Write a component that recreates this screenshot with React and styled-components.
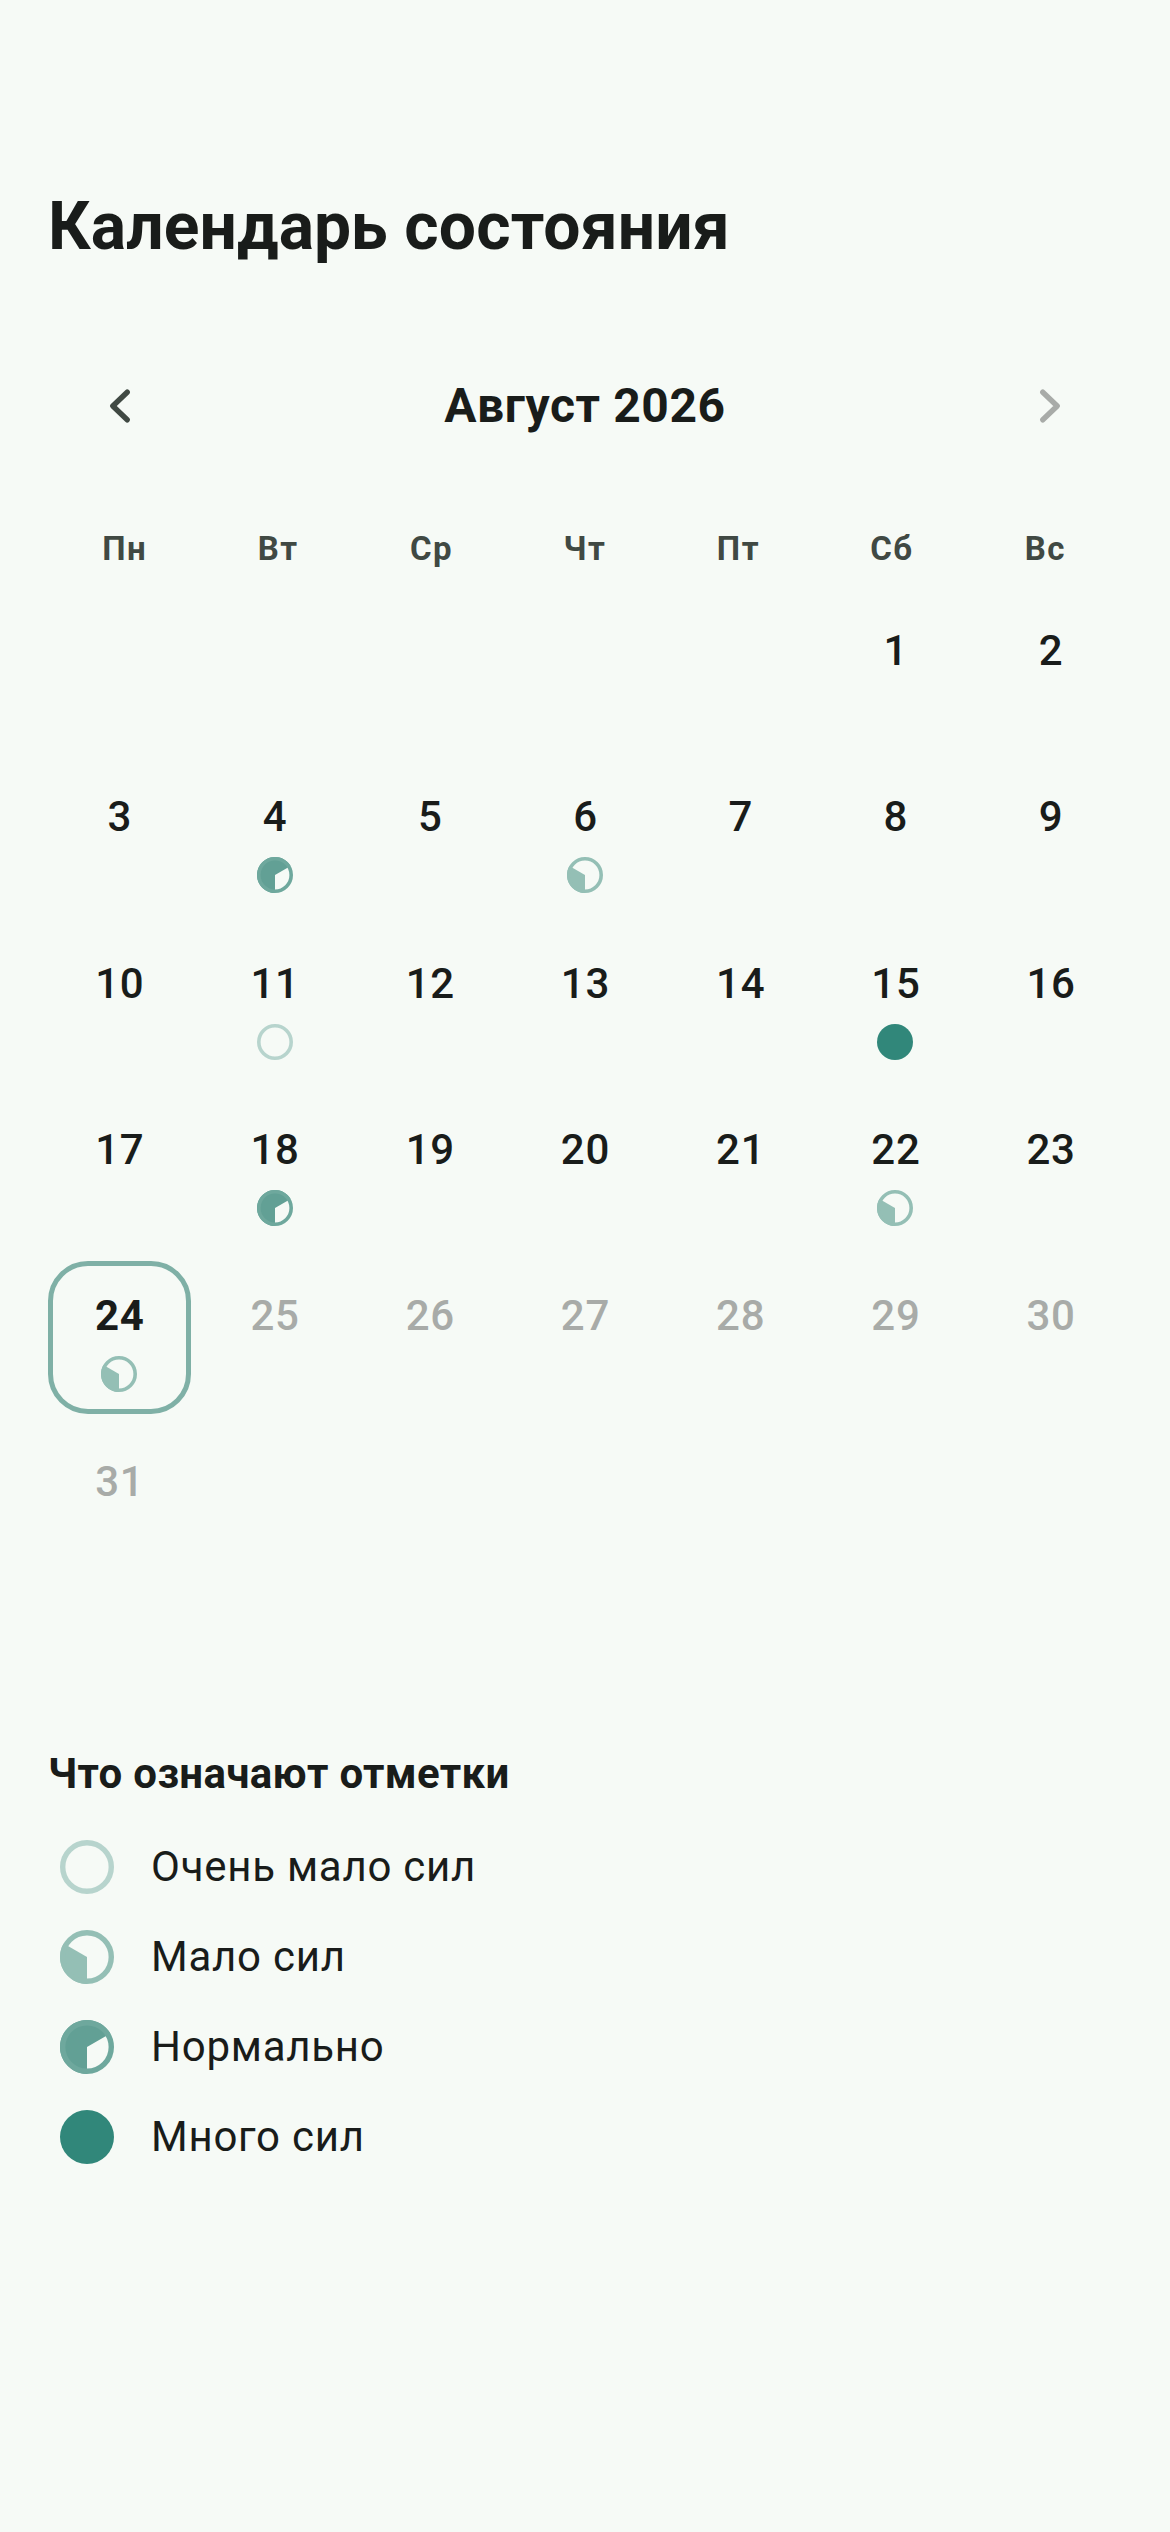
import React from "react";
import styled, { createGlobalStyle } from "styled-components";

const Global = createGlobalStyle`
  html, body { margin: 0; padding: 0; background: #f6faf6; }
  body { font-family: Roboto, "Noto Sans", sans-serif; color: #191c1a; }
`;
const Page = styled.div`
  width: 1170px;
  height: 2532px;
  box-sizing: border-box;
  padding: 183px 48px 0;
  overflow: hidden;
`;
const Title = styled.h1`
  margin: 0;
  font-size: 66px;
  line-height: 88px;
  font-weight: 700;
  letter-spacing: 0.1px;
`;
const MonthBar = styled.div`
  display: flex;
  align-items: center;
  justify-content: space-between;
  height: 144px;
  margin-top: 63px;
`;
const NavButton = styled.div`
  width: 144px;
  height: 144px;
  display: flex;
  align-items: center;
  justify-content: center;
  color: ${(p) => (p.$dim ? "#a8aba8" : "#404943")};
`;
const Month = styled.div`
  font-size: 48px;
  font-weight: 700;
  line-height: 64px;
  letter-spacing: 0.6px;
`;
const Weekdays = styled.div`
  display: grid;
  grid-template-columns: repeat(7, 1fr);
  margin-top: 47px;
`;
const Weekday = styled.div`
  text-align: center;
  font-size: 33px;
  line-height: 48px;
  font-weight: 700;
  letter-spacing: 1.5px;
  color: #404943;
`;
const Days = styled.div`
  display: grid;
  grid-template-columns: repeat(7, 1fr);
  grid-auto-rows: 153px;
  column-gap: 12.5px;
  row-gap: 13.3px;
  margin-top: 23px;
`;
const Cell = styled.div`
  box-sizing: border-box;
  border-radius: 40px;
  border: ${(p) => (p.$today ? "5px solid #7fb0a6" : "5px solid transparent")};
  display: flex;
  flex-direction: column;
  align-items: center;
  padding-top: 22px;
  gap: 12px;
`;
const DayNumber = styled.div`
  font-size: 42px;
  line-height: 56px;
  letter-spacing: 0.75px;
  margin-left: 1px;
  font-weight: ${(p) => (p.$today ? 700 : 500)};
  color: ${(p) => (p.$muted ? "#a8aba8" : "#191c1a")};
`;
const Legend = styled.div`
  margin-top: 166px;
`;
const LegendTitle = styled.h2`
  margin: 0 0 20px;
  font-size: 42px;
  line-height: 56px;
  font-weight: 700;
  letter-spacing: 0.33px;
`;
const LegendRow = styled.div`
  display: flex;
  align-items: center;
  height: 90px;
  padding-left: 12px;
  gap: 37px;
`;
const LegendLabel = styled.div`
  font-size: 42px;
  letter-spacing: 0.75px;
  line-height: 56px;
`;

const polar = (deg) => {
  const a = (deg * Math.PI) / 180;
  return [50 + 50 * Math.sin(a), 50 - 50 * Math.cos(a)];
};

// wedge going clockwise, angles from 12 o'clock
const wedge = (from, to) => {
  const [x1, y1] = polar(from);
  const [x2, y2] = polar(to);
  return `M50 50L${x1} ${y1}A50 50 0 ${to - from > 180 ? 1 : 0} 1 ${x2} ${y2}Z`;
};

const MARKS = {
  1: { color: "#b7d4cd", from: 0, to: 0 },
  2: { color: "#94bfb5", from: 180, to: 300 },
  3: { color: "#62a095", ring: "#6ea89d", from: 180, to: 420 },
  4: { color: "#31877a", from: 0, to: 0, full: true },
};

function Mark({ level, size = 36 }) {
  const m = MARKS[level];
  return (
    <svg width={size} height={size} viewBox="0 0 100 100" style={{ display: "block" }}>
      {m.full ? (
        <circle cx="50" cy="50" r="50" fill={m.color} />
      ) : (
        <>
          {m.to > m.from && <path d={wedge(m.from, m.to)} fill={m.color} />}
          <circle cx="50" cy="50" r="45" fill="none" stroke={m.ring || m.color} strokeWidth="10" />
        </>
      )}
    </svg>
  );
}

const WEEK = ["Пн", "Вт", "Ср", "Чт", "Пт", "Сб", "Вс"];
const LEVELS = { 4: 3, 6: 2, 11: 1, 15: 4, 18: 3, 22: 2, 24: 2 };
const TODAY = 24;
const LEGEND = [
  [1, "Очень мало сил"],
  [2, "Мало сил"],
  [3, "Нормально"],
  [4, "Много сил"],
];

export default function App() {
  const days = Array.from({ length: 31 }, (_, i) => i + 1);
  return (
    <Page>
      <Global />
      <Title>Календарь состояния</Title>
      <MonthBar>
        <NavButton>
          <svg width="72" height="72" viewBox="0 0 24 24" fill="none" stroke="currentColor" strokeWidth="1.8" strokeLinecap="round" strokeLinejoin="round">
            <path d="M14.4 7.4 9.6 12l4.8 4.6" />
          </svg>
        </NavButton>
        <Month>Август 2026</Month>
        <NavButton $dim>
          <svg width="72" height="72" viewBox="0 0 24 24" fill="none" stroke="currentColor" strokeWidth="1.8" strokeLinecap="round" strokeLinejoin="round">
            <path d="M9.6 7.4 14.4 12l-4.8 4.6" />
          </svg>
        </NavButton>
      </MonthBar>
      <Weekdays>
        {WEEK.map((d) => (
          <Weekday key={d}>{d}</Weekday>
        ))}
      </Weekdays>
      <Days>
        {Array.from({ length: 5 }, (_, i) => (
          <div key={"e" + i} />
        ))}
        {days.map((d) => (
          <Cell key={d} $today={d === TODAY}>
            <DayNumber $today={d === TODAY} $muted={d > TODAY}>{d}</DayNumber>
            {LEVELS[d] && <Mark level={LEVELS[d]} />}
          </Cell>
        ))}
      </Days>
      <Legend>
        <LegendTitle>Что означают отметки</LegendTitle>
        {LEGEND.map(([level, label]) => (
          <LegendRow key={level}>
            <Mark level={level} size={54} />
            <LegendLabel>{label}</LegendLabel>
          </LegendRow>
        ))}
      </Legend>
    </Page>
  );
}
